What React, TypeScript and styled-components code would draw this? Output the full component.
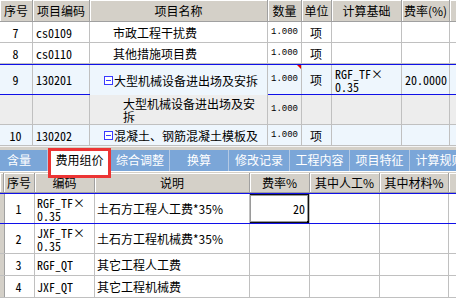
import styled, { createGlobalStyle } from "styled-components";

const GlobalStyle = createGlobalStyle`
  body {
    margin: 0;
    overflow: hidden;
    background: #ffffff;
    font-family: "Noto Sans Mono CJK SC", "Noto Sans CJK SC", "DejaVu Sans Mono", monospace;
    font-size: 12px;
    color: #000;
  }
`;

const GRID = "#c0c0c0";
const BLUE = "#1010e8";
const FACE = "#d4d0c8";

const Screen = styled.div`
  width: 456px;
  height: 298px;
  overflow: hidden;
  background: ${FACE};
  display: flex;
  flex-direction: column;
`;

const Grid = styled.div`
  display: flex;
  flex-direction: column;
  background: #fff;
`;

const Row = styled.div<{ $cols: string; $h: number; $bg?: string; $sel?: boolean }>`
  display: grid;
  grid-template-columns: ${(p) => p.$cols};
  height: ${(p) => p.$h}px;
  box-sizing: border-box;
  background: ${(p) => p.$bg || "#fff"};
  border-top: ${(p) => (p.$sel ? `1px solid ${BLUE}` : "none")};
  border-bottom: ${(p) => (p.$sel ? `1px solid ${BLUE}` : "none")};
  & > div {
    border-bottom: ${(p) => (p.$sel ? "none" : `1px solid ${GRID}`)};
  }
`;

const HeadCell = styled.div`
  box-sizing: border-box;
  background: ${FACE};
  border-right: 1px solid #a0a0a0;
  border-bottom: 1px solid #a0a0a0 !important;
  box-shadow: inset 1px 1px 0 #ffffff;
  display: flex;
  align-items: center;
  justify-content: center;
  white-space: nowrap;
  overflow: hidden;
  font-family: "Noto Sans CJK SC", sans-serif;
  font-size: 12px;
`;

const Cell = styled.div<{ $align?: "left" | "center" | "right"; $pad?: number; $gray?: boolean; $open?: boolean }>`
  box-sizing: border-box;
  position: relative;
  border-right: 1px solid ${GRID};
  display: flex;
  align-items: center;
  justify-content: ${(p) =>
    p.$align === "center" ? "center" : p.$align === "right" ? "flex-end" : "flex-start"};
  padding-left: ${(p) => (p.$align === "right" ? 0 : p.$pad ?? 3)}px;
  padding-right: ${(p) => (p.$align === "right" ? p.$pad ?? 3 : 4)}px;
  line-height: 13px;
  overflow: hidden;
  ${(p) => p.$gray && `background: ${FACE}; border-right-color: #a0a0a0;`}
  ${(p) => p.$open && `margin-bottom: -1px; background: inherit;`}
`;

const Name = styled.span`
  font-family: "Noto Sans CJK SC", sans-serif;
  line-height: 13px;
  white-space: nowrap;
`;

const WrapName = styled(Name)`
  white-space: normal;
`;

const Qty = styled.span`
  font-family: "Liberation Mono", monospace;
  font-size: 9px;
`;

const Marker = styled.span`
  position: absolute;
  top: 0;
  right: 0;
  width: 0;
  height: 0;
  border-top: 4px solid #e00000;
  border-left: 4px solid transparent;
`;

const TreeIcon = styled.svg`
  flex: none;
  margin-right: 1px;
`;

const Splitter = styled.div`
  height: 4px;
  box-sizing: border-box;
  border-top: 1px solid #f4f4f4;
  background: ${FACE};
`;

const TabBar = styled.div`
  display: flex;
  height: 22px;
  background: #7ba6d8;
  white-space: nowrap;
`;

const Tab = styled.div<{ $w: number; $active?: boolean; $left?: boolean }>`
  flex: none;
  width: ${(p) => p.$w}px;
  box-sizing: border-box;
  position: relative;
  display: flex;
  align-items: center;
  justify-content: ${(p) => (p.$left ? "flex-start" : "center")};
  padding-left: ${(p) => (p.$left ? 7 : 0)}px;
  border-right: 1px solid #b4c9e4;
  color: ${(p) => (p.$active ? "#000" : "#fff")};
  font-family: "Noto Sans CJK SC", sans-serif;
  font-size: 12px;
  line-height: 14px;
  z-index: ${(p) => (p.$active ? 2 : 0)};
  ${(p) =>
    p.$active &&
    `
    border-right: none;
    &::before {
      content: "";
      position: absolute;
      left: 0;
      right: 0;
      top: -2px;
      bottom: -7px;
      background: #fff;
      border: 3px solid #ec3434;
      box-sizing: border-box;
    }
  `}
  & > span {
    position: relative;
    margin-top: -1px;
  }
`;

const Gap = styled.div`
  height: 2px;
  box-sizing: border-box;
  border-top: 1px solid #ffffff;
  background: ${FACE};
`;

const EditBox = styled.div`
  position: absolute;
  left: -2px;
  top: -1px;
  right: -1px;
  bottom: -1px;
  border: 2px solid #111;
  box-shadow: inset 0 0 0 1px #9a9a9a;
  &::after {
    content: "";
    position: absolute;
    right: -4px;
    bottom: -4px;
    width: 5px;
    height: 5px;
    background: #000;
  }
`;

const RowMark = styled.span`
  width: 3px;
  height: 1px;
  background: #333;
`;

const Minus = () => (
  <TreeIcon width="9" height="9" viewBox="0 0 9 9">
    <rect x="0.5" y="0.5" width="8" height="8" fill="#fff" stroke="#3a3aff" />
    <line x1="2" y1="4.5" x2="7" y2="4.5" stroke="#3a3aff" />
  </TreeIcon>
);

const TOP = "33px 57px 178px 34px 30px 70px 48px 40px";
const LOW = "4px 31px 60px 155px 60px 70px 69px 40px";
const LIGHT = "#eef6fd";

const tabs = [
  { t: "含量", w: 48, left: true },
  { t: "费用组价", w: 63, active: true },
  { t: "综合调整", w: 59 },
  { t: "换算", w: 59 },
  { t: "修改记录", w: 61 },
  { t: "工程内容", w: 60 },
  { t: "项目特征", w: 60 },
  { t: "计算规则", w: 60 },
];

const lowRows = [
  { no: "1", code: "RGF_TF×\n0.35", desc: "土石方工程人工费*35%", h: 31, sel: true, rate: "20" },
  { no: "2", code: "JXF_TF×\n0.35", desc: "土石方工程机械费*35%", h: 30 },
  { no: "3", code: "RGF_QT", desc: "其它工程人工费", h: 22 },
  { no: "4", code: "JXF_QT", desc: "其它工程机械费", h: 22 },
];

export default function App() {
  return (
    <Screen>
      <GlobalStyle />
      <Grid>
        <Row $cols={TOP} $h={22}>
          {["序号", "项目编码", "项目名称", "数量", "单位", "计算基础", "费率(%)", ""].map((h, i) => (
            <HeadCell key={i}>{h}</HeadCell>
          ))}
        </Row>
        {[
          { no: "7", code: "cs0109", name: "市政工程干扰费" },
          { no: "8", code: "cs0110", name: "其他措施项目费" },
        ].map((r) => (
          <Row key={r.no} $cols={TOP} $h={21}>
            <Cell $align="center">{r.no}</Cell>
            <Cell>{r.code}</Cell>
            <Cell $pad={23}>
              <Name>{r.name}</Name>
            </Cell>
            <Cell $align="right">
              <Qty>1.000</Qty>
            </Cell>
            <Cell $align="center">
              <Name>项</Name>
            </Cell>
            <Cell />
            <Cell />
            <Cell />
          </Row>
        ))}
        <Row $cols={TOP} $h={31} $bg={LIGHT} $sel>
          <Cell $align="center">9</Cell>
          <Cell>130201</Cell>
          <Cell $pad={14} $open>
            <Minus />
            <Name>大型机械设备进出场及安拆</Name>
          </Cell>
          <Cell $align="right">
            <Qty>1.000</Qty>
            <Marker />
          </Cell>
          <Cell $align="center">
            <Name>项</Name>
          </Cell>
          <Cell style={{ whiteSpace: "pre" }}>{"RGF_TF×\n0.35"}</Cell>
          <Cell>20.0000</Cell>
          <Cell />
        </Row>
        <Row $cols={TOP} $h={30} $bg="#ededed">
          <Cell />
          <Cell />
          <Cell $pad={33}>
            <WrapName>大型机械设备进出场及安拆</WrapName>
          </Cell>
          <Cell $align="right">
            <Qty>1.000</Qty>
          </Cell>
          <Cell />
          <Cell />
          <Cell />
          <Cell />
        </Row>
        <Row $cols={TOP} $h={21} $bg={LIGHT}>
          <Cell $align="center">10</Cell>
          <Cell>130202</Cell>
          <Cell $pad={14}>
            <Minus />
            <Name>混凝土、钢筋混凝土模板及</Name>
          </Cell>
          <Cell $align="right">
            <Qty>1.000</Qty>
          </Cell>
          <Cell $align="center">
            <Name>项</Name>
          </Cell>
          <Cell />
          <Cell />
          <Cell />
        </Row>
      </Grid>
      <Splitter />
      <TabBar>
        {tabs.map((t) => (
          <Tab key={t.t} $w={t.w} $active={t.active} $left={t.left}>
            <span>{t.t}</span>
          </Tab>
        ))}
      </TabBar>
      <Gap />
      <Grid>
        <Row $cols={LOW} $h={20}>
          {["", "序号", "编码", "说明", "费率%", "其中人工%", "其中材料%", ""].map((h, i) => (
            <HeadCell key={i}>{h}</HeadCell>
          ))}
        </Row>
        {lowRows.map((r) => (
          <Row key={r.no} $cols={LOW} $h={r.h} $sel={r.sel}>
            <Cell $gray $pad={0}>{r.sel && <RowMark />}</Cell>
            <Cell $align="center">{r.no}</Cell>
            <Cell $pad={2} style={{ whiteSpace: "pre" }}>
              {r.code}
            </Cell>
            <Cell $pad={2}>
              <Name>{r.desc}</Name>
            </Cell>
            <Cell $align="right" $pad={4}>
              {r.rate}
              {r.rate && <EditBox />}
            </Cell>
            <Cell />
            <Cell />
            <Cell />
          </Row>
        ))}
      </Grid>
    </Screen>
  );
}
